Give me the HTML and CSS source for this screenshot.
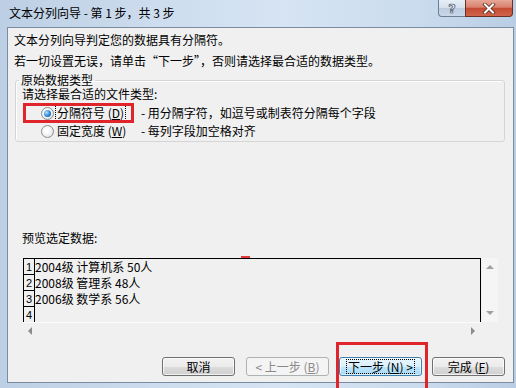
FILE: index.html
```html
<!DOCTYPE html>
<html lang="zh-CN">
<head>
<meta charset="utf-8">
<title>文本分列向导</title>
<link rel="stylesheet" href="styles.css">
</head>
<body>
<div class="window">
  <div class="titlebar">
    <span class="title">文本分列向导 - 第 1 步，共 3 步</span>
    <div class="caption">
      <span class="cbtn help">?</span>
      <span class="cbtn close">
        <svg width="16" height="11" viewBox="0 0 16 11">
          <path d="M4 1.5 L12 9.5 M12 1.5 L4 9.5" stroke="#5a2a22" stroke-width="3.6" stroke-linecap="square" fill="none"/>
          <path d="M4 1.5 L12 9.5 M12 1.5 L4 9.5" stroke="#ffffff" stroke-width="2" stroke-linecap="square" fill="none"/>
        </svg>
      </span>
    </div>
  </div>
  <div class="client">
    <p class="intro">文本分列向导判定您的数据具有分隔符。<br>若一切设置无误，请单击“下一步”，否则请选择最合适的数据类型。</p>
    <fieldset class="group">
      <legend>原始数据类型</legend>
      <div class="prompt">请选择最合适的文件类型:</div>
      <div class="opt first">
        <span class="mark-red"></span>
        <span class="radio checked"></span>
        <span class="opt-label"><span class="focus">分隔符号 (<u>D</u>)</span></span>
        <span class="opt-desc">- 用分隔字符，如逗号或制表符分隔每个字段</span>
      </div>
      <div class="opt">
        <span class="radio"></span>
        <span class="opt-label"><span class="nofocus">固定宽度 (<u>W</u>)</span></span>
        <span class="opt-desc">- 每列字段加空格对齐</span>
      </div>
    </fieldset>
    <div class="preview-label">预览选定数据:</div>
    <div class="preview">
      <span class="red-dash"></span>
      <div class="grid">
        <div class="row"><span class="num">1</span><span class="cell">2004级 计算机系 50人</span></div>
        <div class="row"><span class="num">2</span><span class="cell">2008级 管理系 48人</span></div>
        <div class="row"><span class="num">3</span><span class="cell">2006级 数学系 56人</span></div>
        <div class="row"><span class="num">4</span><span class="cell"></span></div>
      </div>
      <div class="vscroll">
        <span class="arr up"></span>
        <span class="arr down"></span>
      </div>
    </div>
    <div class="hscroll">
      <span class="arr left"></span>
      <span class="arr right"></span>
    </div>
    <div class="buttons">
      <span class="mark-red2"></span>
      <button class="btn w73">取消</button>
      <button class="btn w83 disabled">&lt; 上一步 (<u>B</u>)</button>
      <button class="btn w83 default"><span class="focus">下一步 (<u>N</u>) &gt;</span></button>
      <button class="btn w73">完成 (<u>F</u>)</button>
    </div>
  </div>
</div>
</body>
</html>
```
FILE: styles.css
```css
* { box-sizing: border-box; }
html, body { margin: 0; padding: 0; }
body {
  width: 516px;
  height: 388px;
  overflow: hidden;
  font-family: "Noto Sans CJK SC", "Liberation Sans", sans-serif;
  font-size: 12px;
  color: #000;
}
.window {
  position: relative;
  width: 516px;
  height: 388px;
  display: flex;
  flex-direction: column;
  background: linear-gradient(to right, #bccfe4 0%, #cddcee 30%, #d6e4f3 55%, #cbdcee 80%, #b9cde4 100%);
}
.titlebar {
  height: 27px;
  display: flex;
  justify-content: space-between;
  align-items: flex-start;
  padding-left: 9px;
}
.title { line-height: 26px; }
.caption { display: flex; margin-right: 3px; }
.cbtn {
  height: 17px;
  display: flex;
  align-items: center;
  justify-content: center;
}
.help {
  width: 27px;
  border: 1px solid #6d7f96;
  border-top: none;
  border-right: none;
  border-radius: 0 0 0 4px;
  background: linear-gradient(#e7eef6, #d6e0ec 50%, #bccde0 51%, #cad8e8);
  color: #eef3f8;
  font-family: "DejaVu Sans", sans-serif;
  font-weight: bold;
  font-size: 13px;
  -webkit-text-stroke: 0.7px #3d4e66;
}
.close {
  width: 48px;
  border: 1px solid #6b2f28;
  border-top: none;
  border-radius: 0 0 4px 0;
  background: linear-gradient(#e6a797, #d9826e 45%, #c44a33 52%, #d2644c);
}
.client {
  flex: 1;
  margin: 0 2px 5px 7px;
  border: 1px solid #7b8ca0;
  background: #f0f0f0;
  display: flex;
  flex-direction: column;
}
.intro {
  margin: 1px 0 0 6px;
  line-height: 21px;
}
.group {
  margin: 3px 8px 0 7px;
  padding: 0 0 1px 0;
  min-width: 0;
  border: 1px solid #d5d5d5;
  border-radius: 3px;
  box-shadow: inset 1px 1px 0 #fff;
}
.group legend {
  margin-left: 3px;
  padding: 0 2px;
  line-height: 12px;
  height: 12px;
}
.prompt {
  margin: 1px 0 0 6px;
  line-height: 14px;
}
.opt {
  position: relative;
  height: 18px;
  display: flex;
  align-items: center;
}
.opt.first { margin-top: 3px; }
.radio {
  position: relative;
  width: 13px;
  height: 13px;
  margin-left: 25px;
  border-radius: 50%;
  border: 1px solid #8a8d90;
  background: radial-gradient(circle at 40% 40%, #ffffff 20%, #d9dadb 100%);
  flex: none;
}
.radio.checked::after {
  content: "";
  position: absolute;
  left: 2px;
  top: 2px;
  width: 7px;
  height: 7px;
  border-radius: 50%;
  background: radial-gradient(circle at 35% 35%, #b7e2ff 0%, #2b86d6 55%, #0c4a92 100%);
}
.opt-label {
  width: 86px;
  margin-left: 1px;
  flex: none;
  line-height: 14px;
}
.focus, .nofocus {
  display: inline-block;
  padding: 0 1px;
  border: 1px dotted transparent;
}
.opt .focus { border-color: #000; }
.opt-desc { line-height: 14px; }
.mark-red {
  position: absolute;
  left: 7px;
  top: -1px;
  width: 111px;
  height: 20px;
  border: 3px solid #e0242b;
}
.preview-label {
  margin: 89px 0 0 14px;
  line-height: 14px;
}
.preview {
  position: relative;
  margin: 13px 0 0 15px;
  height: 64px;
  display: flex;
}
.red-dash {
  position: absolute;
  left: 218px;
  top: -2px;
  width: 9px;
  height: 2px;
  background: #e03a3a;
}
.grid {
  width: 458px;
  height: 64px;
  overflow: hidden;
  border: 1px solid #000;
  border-bottom: none;
}
.row {
  display: flex;
  height: 16px;
}
.num {
  width: 11px;
  flex: none;
  border-right: 1px solid #000;
  border-bottom: 1px solid #000;
  font-family: "Liberation Sans", sans-serif;
  font-size: 11px;
  line-height: 17px;
  padding-left: 2px;
}
.row:last-child .num { border-bottom: none; }
.cell {
  line-height: 16px;
  white-space: pre;
}
.vscroll {
  width: 16px;
  margin-left: 1px;
  background: #f5f5f5;
  display: flex;
  flex-direction: column;
  justify-content: space-between;
  align-items: center;
  padding: 7px 0 7px;
}
.arr {
  width: 0;
  height: 0;
  display: block;
}
.arr.up {
  border-left: 4px solid transparent;
  border-right: 4px solid transparent;
  border-bottom: 4px solid #a0a0a0;
}
.arr.down {
  border-left: 4px solid transparent;
  border-right: 4px solid transparent;
  border-top: 4px solid #a0a0a0;
}
.hscroll {
  height: 16px;
  width: 458px;
  margin-left: 15px;
  display: flex;
  justify-content: space-between;
  align-items: center;
  padding: 0 6px 0 5px;
  border-top: 1px solid #fbfbfb;
}
.arr.left {
  border-top: 4px solid transparent;
  border-bottom: 4px solid transparent;
  border-right: 4px solid #8c8c8c;
}
.arr.right {
  border-top: 4px solid transparent;
  border-bottom: 4px solid transparent;
  border-left: 4px solid #8c8c8c;
}
.buttons {
  position: relative;
  margin-top: 19px;
  padding-right: 8px;
  display: flex;
  justify-content: flex-end;
  gap: 10px;
}
.btn {
  height: 19px;
  padding: 0;
  font-family: "Noto Sans CJK SC", "Liberation Sans", sans-serif;
  font-size: 12px;
  line-height: 15px;
  color: #000;
  border: 1px solid #707070;
  border-radius: 3px;
  background: linear-gradient(#f2f2f2 0%, #ebebeb 50%, #dddddd 51%, #cfcfcf 100%);
  box-shadow: inset 0 0 0 1px rgba(255,255,255,0.7);
  display: flex;
  align-items: center;
  justify-content: center;
}
.btn.w73 { width: 73px; }
.btn.w83 { width: 83px; }
.btn.w73:first-of-type { margin-right: 1px; }
.btn.disabled {
  color: #8a8a8a;
  border-color: #adb2b5;
  background: #f4f4f4;
  box-shadow: none;
}
.btn.default {
  border-color: #3c7fb1;
  background: linear-gradient(#eaf6fd 0%, #d9f0fc 50%, #bee6fd 51%, #a7d9f5 100%);
  box-shadow: inset 0 0 0 1px rgba(255,255,255,0.6);
}
.btn .focus {
  border-color: #000;
  line-height: 13px;
}
.mark-red2 {
  position: absolute;
  left: 328px;
  top: -15px;
  width: 92px;
  height: 50px;
  border: 3px solid #e0242b;
}
```
